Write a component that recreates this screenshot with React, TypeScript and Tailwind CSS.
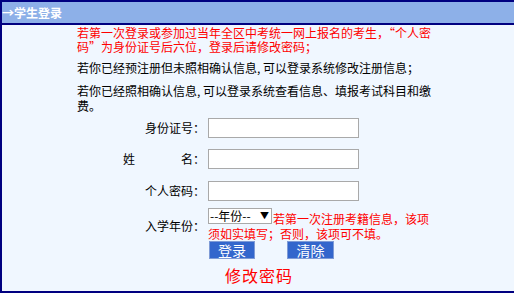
export default function App() {
  return (
    <div className="w-[514px] h-[295px] overflow-hidden bg-white font-['Noto_Sans_CJK_SC','Noto_Sans',sans-serif] text-[12px] text-black">
      <div className="w-[530px] border-2 border-[#000080]">
        <div className="h-[23px] bg-[#8db0e8] border-b-2 border-[#000080] flex items-center text-white font-bold text-[12px] leading-[14px]">
          <span>→学生登录</span>
        </div>
        <div className="h-[266px] bg-[#f0f7ff] flex flex-col">
          <div className="pl-[75px] pt-[1px]">
            <div className="text-[#ff0000] leading-[14px] whitespace-nowrap">
              <div>若第一次登录或参加过当年全区中考统一网上报名的考生，“个人密</div>
              <div>码”为身份证号后六位，登录后请修改密码；</div>
            </div>
            <div className="mt-[7px] leading-[14px] whitespace-nowrap">若你已经预注册但未照相确认信息, 可以登录系统修改注册信息；</div>
            <div className="mt-[8px] leading-[15px] whitespace-nowrap">
              <div>若你已经照相确认信息, 可以登录系统查看信息、填报考试科目和缴</div>
              <div>费。</div>
            </div>
          </div>

          <div className="mt-[5px] flex items-center">
            <div className="w-[206px] pr-[3px] text-right whitespace-nowrap">身份证号：</div>
            <div className="w-[151px] h-[20px] border border-[#a9a9a9] bg-white"></div>
          </div>
          <div className="mt-[11px] flex items-center">
            <div className="w-[206px] pr-[3px] text-right whitespace-nowrap">
              <span className="inline-block w-[58px] text-left">姓</span>名：
            </div>
            <div className="w-[151px] h-[20px] border border-[#a9a9a9] bg-white"></div>
          </div>
          <div className="mt-[12px] flex items-center">
            <div className="w-[206px] pr-[3px] text-right whitespace-nowrap">个人密码：</div>
            <div className="w-[151px] h-[20px] border border-[#a9a9a9] bg-white"></div>
          </div>
          <div className="mt-[10px] flex items-center">
            <div className="w-[206px] pr-[3px] text-right whitespace-nowrap">入学年份：</div>
            <div className="text-[#ff0000] leading-[15px] whitespace-nowrap">
              <div className="flex items-start">
                <div className="mt-[-3px] w-[64px] h-[16px] border border-[#a9a9a9] bg-white flex items-center justify-between pl-[1px] pr-[2px] text-black leading-[14px]">
                  <span>--年份--</span>
                  <span className="text-[9px]">▼</span>
                </div>
                <span className="ml-[1px]">若第一次注册考籍信息，该项</span>
              </div>
              <div>须如实填写；否则，该项可不填。</div>
            </div>
          </div>
          <div className="flex">
            <div className="ml-[207px] w-[46px] h-[18px] bg-[#3366cc] border border-[#7f9bd6] text-white text-[14px] leading-[16px] flex items-center justify-center">登录</div>
            <div className="ml-[32px] w-[47px] h-[18px] bg-[#3366cc] border border-[#7f9bd6] text-white text-[14px] leading-[16px] flex items-center justify-center">清除</div>
          </div>
          <div className="mt-[7px] ml-[223px] text-[#ff0000] text-[16px] leading-[18px] tracking-[1px] whitespace-nowrap">修改密码</div>
        </div>
      </div>
    </div>
  );
}
